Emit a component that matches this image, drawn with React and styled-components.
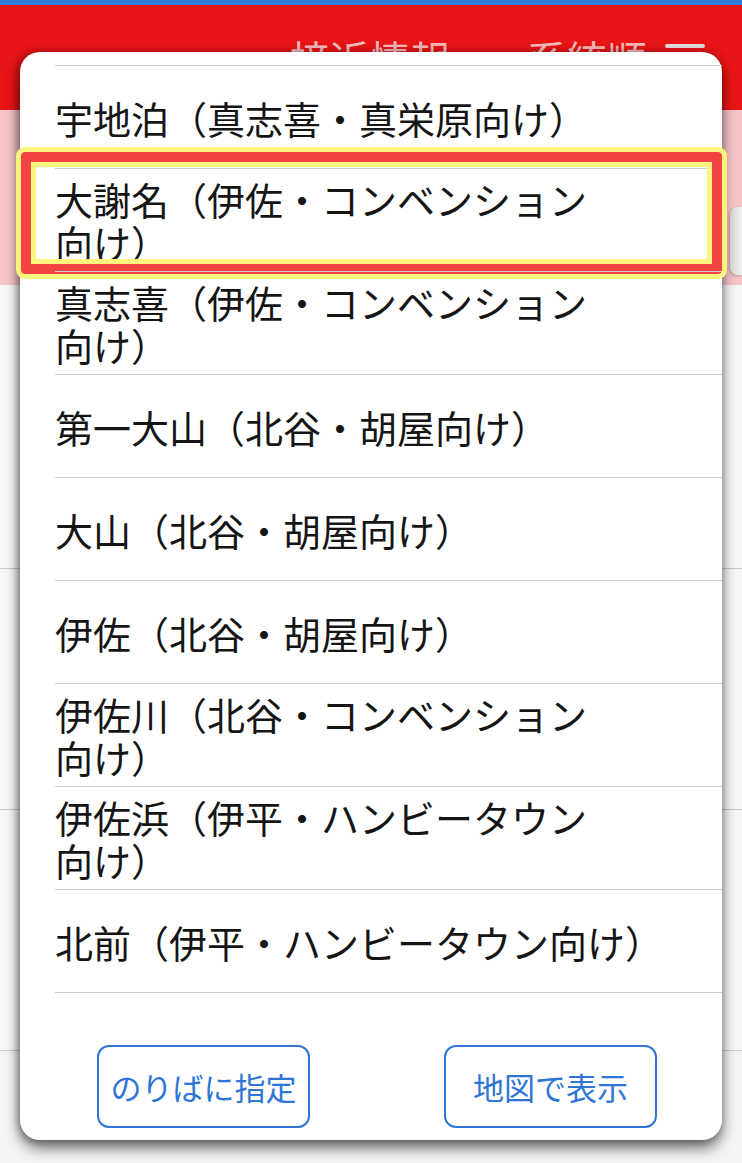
import React from 'react'
import styled, { createGlobalStyle } from "styled-components";

const GlobalStyle = createGlobalStyle`
    html, body {
        margin: 0;
        padding: 0;
        background: #f4f4f4;
    }
    body {
        font-family: "Noto Sans CJK JP", "Noto Sans", sans-serif;
    }
`

let Screen = styled.div`
    width: 742px;
    height: 1163px;
    position: relative;
    overflow: hidden;
    background: #f4f4f4;
`
let TopStrip = styled.div`
    height: 5px;
    background: #2f7bd8;
`
let Header = styled.div`
    height: 105px;
    background: #e81416;
    display: flex;
    align-items: center;
    justify-content: flex-end;
    padding-right: 37px;
    .tab {
        font-size: 40px;
        line-height: 1;
        color: #f4b9bb;
    }
    .tab + .tab {
        margin-left: 77px;
    }
`
let Burger = styled.div`
    width: 40px;
    margin-left: 18px;
    display: flex;
    flex-direction: column;
    gap: 8px;
    span {
        height: 4px;
        border-radius: 2px;
        background: #e2dcdc;
    }
`
let PinkBand = styled.div`
    height: 175px;
    background: #f6c4c6;
    display: flex;
    justify-content: flex-end;
    align-items: flex-start;
    padding-top: 97px;
    box-sizing: border-box;
    .edge {
        width: 12px;
        height: 68px;
        border-radius: 8px 0 0 8px;
        background: linear-gradient(90deg, #d8d8d8, #f2f2f2);
        box-shadow: -1px 1px 3px rgba(0,0,0,0.25);
    }
`
let BgRow = styled.div`
    height: ${p => p.h}px;
    border-bottom: 1px solid #c9c9c9;
    background: #f6f6f6;
`

let Overlay = styled.div`
    position: absolute;
    inset: 0;
    padding: 52px 20px 0;
`
let Modal = styled.div`
    width: 702px;
    height: 1088px;
    box-sizing: border-box;
    background: #fff;
    border-radius: 20px;
    box-shadow: 0 8px 14px rgba(0,0,0,0.55), -2px 0 8px rgba(0,0,0,0.3);
    padding-top: 13px;
    display: flex;
    flex-direction: column;
`
let List = styled.div`
    margin-left: 35px;
    border-bottom: 1px solid #cfcfcf;
`
let Item = styled.div`
    position: relative;
    height: 103px;
    box-sizing: border-box;
    border-top: 1px solid #cfcfcf;
    display: flex;
    align-items: center;
    .label {
        max-width: 620px;
        font-size: 38px;
        line-height: 43px;
        color: #151515;
    }
    .tail {
        white-space: nowrap;
    }
`
let Highlight = styled.div`
    position: absolute;
    left: -39px;
    right: -5px;
    top: -22px;
    bottom: -8px;
    border: 5px solid #fdf37f;
    border-radius: 9px;
    box-shadow: inset 0 0 0 10px #f44343, inset 0 0 0 15px #fdf37f;
    pointer-events: none;
`
let Actions = styled.div`
    margin-top: 52px;
    display: flex;
    justify-content: space-between;
    padding: 0 65px 0 77px;
`
let Button = styled.button`
    width: 213px;
    height: 83px;
    box-sizing: border-box;
    border: 2px solid #2e75d6;
    border-radius: 12px;
    background: #fff;
    color: #2e75d6;
    font-family: "Noto Sans CJK JP", sans-serif;
    font-size: 31px;
    padding: 0;
    cursor: pointer;
`

const stops = [
    "宇地泊（真志喜・真栄原",
    "大謝名（伊佐・コンベンション",
    "真志喜（伊佐・コンベンション",
    "第一大山（北谷・胡屋",
    "大山（北谷・胡屋",
    "伊佐（北谷・胡屋",
    "伊佐川（北谷・コンベンション",
    "伊佐浜（伊平・ハンビータウン",
    "北前（伊平・ハンビータウン",
];

export default function App() {
    let selected = 1;
    return (
        <Screen>
            <GlobalStyle />
            <TopStrip />
            <Header>
                <div className="tab">接近情報</div>
                <div className="tab">系統順</div>
                <Burger><span /><span /><span /></Burger>
            </Header>
            <PinkBand><div className="edge" /></PinkBand>
            <BgRow h={283} />
            <BgRow h={240} />
            <BgRow h={240} />
            <Overlay>
                <Modal>
                    <List>
                        {stops.map((name, i) => (
                            <Item key={name}>
                                <div className="label">{name}<span className="tail">向け）</span></div>
                                {i === selected && <Highlight />}
                            </Item>
                        ))}
                    </List>
                    <Actions>
                        <Button>のりばに指定</Button>
                        <Button>地図で表示</Button>
                    </Actions>
                </Modal>
            </Overlay>
        </Screen>
    )
}
